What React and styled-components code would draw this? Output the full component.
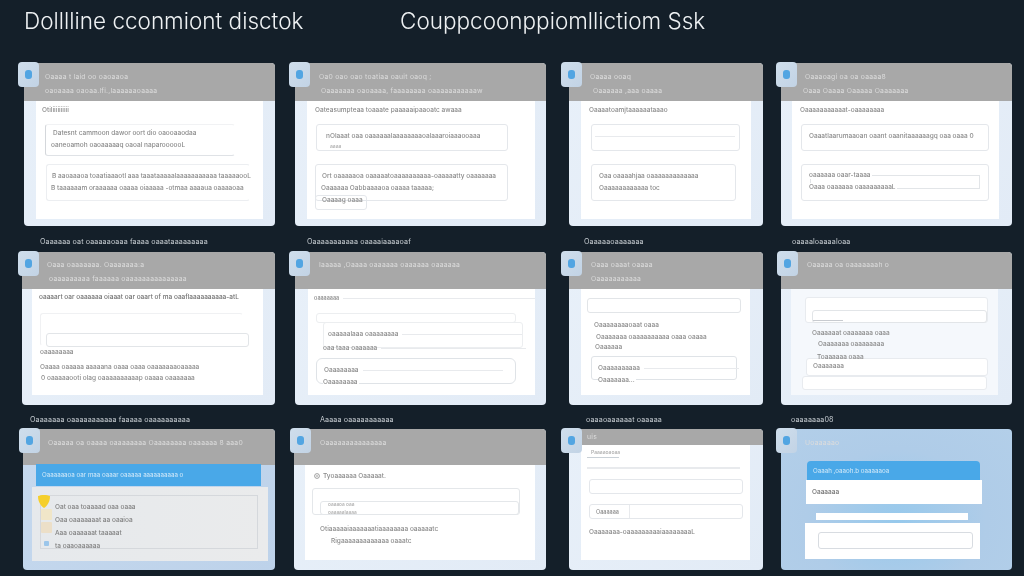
import React from "react";
import styled, { createGlobalStyle } from "styled-components";

const Global = createGlobalStyle`
  html, body { margin: 0; padding: 0; background: #141f29; }
  body { width: 1024px; height: 576px; overflow: hidden; font-family: "Inter", "Liberation Sans", sans-serif; }
`;
const Page = styled.div`
  width: 1024px; height: 576px; background: #141f29; display: flex; flex-direction: column;
`;
const TitleBar = styled.div`
  height: 63px; display: flex; align-items: flex-start; padding: 8px 0 0 24px; box-sizing: border-box;
`;
const Title = styled.h1`
  margin: 0; width: ${(p) => p.$w}px; white-space: nowrap; font-size: 22.5px; line-height: 26px;
  font-weight: 300; color: #eef1f3; filter: blur(0.35px);
`;
const Row = styled.div`
  display: grid; grid-template-columns: 295px 274px 212px 243px; height: ${(p) => p.$h}px;
`;
const Cell = styled.div`display: flex; flex-direction: column;`;
const Card = styled.div`
  position: relative; box-sizing: border-box; display: flex; flex-direction: column;
  margin-left: ${(p) => p.$x}px; width: ${(p) => p.$w}px; height: ${(p) => p.$h}px; border-radius: 4px;
  background: ${(p) => p.$bg || "linear-gradient(135deg, #e8f0f9, #e2ebf6)"};
`;
const Badge = styled.div`
  position: absolute; left: ${(p) => p.$x}px; top: -1px; width: 21px; height: 25px; border-radius: 4px;
  background: linear-gradient(135deg, #cfdeec, #c2d3e5); display: flex; align-items: center; justify-content: center;
  &::after { content: ""; width: 6.5px; height: 9px; border-radius: 3px; background: #52a5e2; filter: blur(0.3px); }
`;
const Header = styled.div`
  height: ${(p) => p.$h}px; flex: none; box-sizing: border-box; border-radius: 4px 4px 0 0;
  background: ${(p) => (p.$clear ? "transparent" : "#a8a8a8")}; display: flex; flex-direction: column;
`;
const HeadText = styled.div`
  height: 8px; line-height: 8px; font-size: 6.8px; white-space: nowrap; color: #dcdcdc; filter: blur(0.4px);
  margin-left: ${(p) => p.$l}px; margin-top: ${(p) => p.$t}px; letter-spacing: 0.25px;
`;
const Body = styled.div`
  flex: 1; min-height: 0; overflow: hidden; display: flex; flex-direction: column;
  margin: 0 ${(p) => p.$r}px ${(p) => p.$b}px ${(p) => p.$l}px;
  background: ${(p) => p.$bg || "#fff"};
`;
const Line = styled.div`
  height: 8px; line-height: 8px; font-size: ${(p) => p.$fs || 6.5}px; white-space: nowrap; flex: none;
  color: ${(p) => p.$c || "#8a8a8a"}; filter: blur(0.4px); font-weight: 500;
  margin-left: ${(p) => p.$l || 0}px; margin-top: ${(p) => p.$t || 0}px;
  ${(p) => p.$fit && "align-self: flex-start; background: #fff; padding-right: 1px;"}
`;
const Box = styled.div`
  flex: none; box-sizing: border-box; display: flex; flex-direction: column; border-radius: 3px;
  margin-left: ${(p) => p.$l || 0}px; margin-top: ${(p) => p.$t || 0}px;
  width: ${(p) => p.$w}px; height: ${(p) => p.$h}px;
  border: 1px solid ${(p) => p.$bc || "#e4e7eb"}; background: ${(p) => p.$bg || "#fff"};
  ${(p) => p.$open && "border-right-color: transparent;"}
`;
const Rule = styled.div`
  flex: none; height: ${(p) => p.$h || 1}px; width: ${(p) => p.$w}px; background: ${(p) => p.$c || "#e8eaed"};
  margin-left: ${(p) => p.$l || 0}px; margin-top: ${(p) => p.$t || 0}px;
`;
const Caption = styled.div`
  height: ${(p) => p.$h}px; line-height: ${(p) => p.$h + 5}px; font-size: 7.2px; white-space: nowrap; color: #c6ccd1;
  margin-left: ${(p) => p.$l}px; filter: blur(0.35px); letter-spacing: 0.1px;
`;
const BlueBar = styled.div`
  flex: none; box-sizing: border-box; height: ${(p) => p.$h}px; width: ${(p) => p.$w}px; margin-left: ${(p) => p.$l}px;
  margin-top: ${(p) => p.$t || 0}px; position: relative;
  background: #49a8e8; color: #d6ebf9; font-size: 6.2px; line-height: ${(p) => p.$h}px; padding-left: ${(p) => p.$p}px;
  border-radius: ${(p) => p.$r || 0}px ${(p) => p.$r || 0}px 0 0; white-space: nowrap;
  span { filter: blur(0.35px); display: inline-block; }
`;
const Panel = styled.div`
  flex: none; box-sizing: border-box; display: flex; flex-direction: column;
  margin-left: ${(p) => p.$l}px; margin-top: ${(p) => p.$t || 0}px; width: ${(p) => p.$w}px; height: ${(p) => p.$h}px;
  padding-top: ${(p) => p.$pt || 0}px; background: ${(p) => p.$bg || "#fff"};
`;
const Marked = styled.div`display: flex; align-items: center; margin-left: ${(p) => p.$l}px; margin-top: ${(p) => p.$t}px; gap: 4px; height: 8px;`;
const Swatch = styled.div`
  position: absolute; left: ${(p) => p.$x}px; top: ${(p) => p.$y}px; width: ${(p) => p.$s}px; height: ${(p) => p.$s}px;
  background: ${(p) => p.$c}; border-radius: 1px;
`;
const Split = styled.div`flex: 1; display: flex; align-items: center;`;
const SplitCell = styled.div`width: 40px; height: 100%; display: flex; align-items: center; border-right: 1px solid #e8eaed; box-sizing: border-box;`;
const Shield = styled.svg`position: absolute; left: 14px; top: 65px;`;

const Card11 = () => (
  <Body $l={12} $r={12} $b={7}>
    <Line $l={6} $t={5}>Otiliiiiiiiiii</Line>
    <Box $l={9} $t={10} $w={190} $h={32} $bc="#f1f2f4" $open style={{ borderBottomColor: "#dfe2e6", borderLeftColor: "#d4d7db" }}>
      <Line $l={7} $t={4}>Datesnt cammoon dawor oort dio oaooaaodaa</Line>
      <Line $l={5} $t={4}>oaneoamoh oaoaaaaaq oaoal naparoooooL</Line>
    </Box>
    <Box $l={10} $t={8} $w={204} $h={37} $bc="#eceef1" $open>
      <Line $l={5} $t={7}>B  aaoaaaoa toaatiaaaotl aaa taaataaaaalaaaaaaaaaaa taaaaaooL</Line>
      <Line $l={4} $t={4}>B  taaaaaam oraaaaaa oaaaa oiaaaaa -otmaa aaaaua oaaaaoaa</Line>
    </Box>
  </Body>
);
const Card12 = () => (
  <Body $l={12} $r={11} $b={7}>
    <Line $l={8} $t={5}>Oateasumpteaa toaaate paaaaaipaaoatc awaaa</Line>
    <Box $l={9} $t={10} $w={192} $h={27}>
      <Line $l={9} $t={7}>nOlaaat oaa oaaaaaalaaaaaaaaoalaaaroiaaaooaaa</Line>
      <Line $l={13} $t={2} $fs={5} $c="#aaa">aaaa</Line>
    </Box>
    <Box $l={8} $t={13} $w={193} $h={37}>
      <Line $l={6} $t={7}>Ort oaaaaaoa oaaaaatoaaaaaaaaaa-oaaaaatty oaaaaaaa</Line>
      <Line $l={5} $t={4}>Oaaaaaa Oabbaaaaoa oaaaa taaaaa;</Line>
    </Box>
    <Box $l={8} $t={-6} $w={52} $h={15} style={{ background: "transparent" }}>
      <Line $l={6} $t={0}>Oaaaag oaaa</Line>
    </Box>
  </Body>
);
const Card13 = () => (
  <Body $l={12} $r={12} $b={7}>
    <Line $l={8} $t={5}>Oaaaatoamjtaaaaaataaao</Line>
    <Box $l={10} $t={10} $w={149} $h={27}>
      <Rule $l={3} $t={11} $w={140} />
    </Box>
    <Box $l={10} $t={13} $w={145} $h={37}>
      <Line $l={7} $t={7}>Oaa oaaaahjaa oaaaaaaaaaaaaa</Line>
      <Line $l={7} $t={4}>Oaaaaaaaaaaaa toc</Line>
    </Box>
  </Body>
);
const Card14 = () => (
  <Body $l={11} $r={13} $b={7}>
    <Line $l={8} $t={5}>Oaaaaaaaaaaat-oaaaaaaaa</Line>
    <Box $l={9} $t={10} $w={188} $h={27}>
      <Line $l={7} $t={7}>Oaaatlaarumaaoan oaant oaanitaaaaaagq oaa oaaa 0</Line>
    </Box>
    <Box $l={9} $t={13} $w={188} $h={37}>
      <Box $l={8} $t={10} $w={170} $h={14} $bc="#e2e5e8" style={{ borderRadius: 0 }}>
        <Line $l={-2} $t={-5} $fit>oaaaaaa oaar-taaaa</Line>
        <Line $l={-2} $t={4} $fit>Oaaa oaaaaaa oaaaaaaaaaL</Line>
      </Box>
    </Box>
  </Body>
);

const Card21 = () => (
  <Body $l={10} $r={12} $b={10}>
    <Line $l={7} $t={4} $c="#707070">oaaaart oar oaaaaaa oiaaat oar oaart of ma oaaflaaaaaaaaaa-atL</Line>
    <Box $l={8} $t={12} $w={203} $h={33} $bc="#f0f1f3" style={{ borderBottomColor: "transparent", borderRightColor: "transparent" }}>
      <Box $l={5} $t={19} $w={203} $h={14} $bc="#e2e5e8" />
    </Box>
    <Line $l={8} $t={2}>oaaaaaaaa</Line>
    <Line $l={8} $t={7}>Oaaaa oaaaaa aaaaana oaaa oaaa oaaaaaaaoaaaaa</Line>
    <Line $l={9} $t={3}>0 oaaaaaooti olag oaaaaaaaaaap oaaaa oaaaaaaa</Line>
  </Body>
);
const Card22 = () => (
  <Body $l={13} $r={11} $b={10}>
    <Marked $l={6} $t={5}><Line $fs={5.5}>oaaaaaaa</Line><Rule $w={200} /></Marked>
    <Box $l={8} $t={11} $w={200} $h={10} $bc="#eceef0" />
    <Box $l={15} $t={-1} $w={200} $h={26} $bc="#eceef0">
      <Marked $l={4} $t={7}><Line>oaaaaalaaa oaaaaaaaa</Line><Rule $w={120} /></Marked>
    </Box>
    <Marked $l={15} $t={-4}><Line>oaa taaa oaaaaaa</Line><Rule $w={145} /></Marked>
    <Box $l={8} $t={6} $w={200} $h={26} $bc="#dfe3e7" style={{ borderRadius: 6 }}>
      <Marked $l={7} $t={7}><Line>Oaaaaaaaa</Line><Rule $w={140} /></Marked>
    </Box>
    <Line $l={15} $t={-6} $fit>Oaaaaaaaa</Line>
  </Body>
);
const Card23 = () => (
  <Body $l={12} $r={13} $b={10}>
    <Box $l={6} $t={9} $w={154} $h={15} $bc="#e2e5e8" />
    <Line $l={13} $t={8}>Oaaaaaaaaoaat oaaa</Line>
    <Line $l={15} $t={4}>Oaaaaaaa oaaaaaaaaaa oaaa oaaaa</Line>
    <Line $l={14} $t={2}>Oaaaaaa</Line>
    <Box $l={10} $t={5} $w={146} $h={24} $bc="#dfe3e7">
      <Marked $l={6} $t={7}><Line>Oaaaaaaaaaa</Line><Rule $w={95} /></Marked>
    </Box>
    <Line $l={17} $t={-4} $fit>Oaaaaaaa...</Line>
  </Body>
);
const Card24 = () => (
  <Body $l={10} $r={14} $b={10} $bg="#f5f8fc">
    <Box $l={14} $t={8} $w={183} $h={26} $bc="#e8ebef">
      <Box $l={6} $t={12} $w={175} $h={13} $bc="#e2e5e8">
        <Rule $l={0} $t={9} $w={30} $c="#c8cbd0" />
      </Box>
    </Box>
    <Line $l={21} $t={6}>Oaaaaaat oaaaaaaa oaaa</Line>
    <Line $l={27} $t={3}>Oaaaaaaa oaaaaaaaa</Line>
    <Line $l={26} $t={5}>Toaaaaaa oaaa</Line>
    <Box $l={15} $t={-3} $w={182} $h={18} $bc="#e8ebef">
      <Line $l={6} $t={3}>Oaaaaaaa</Line>
    </Box>
    <Box $l={11} $t={0} $w={185} $h={14} $bc="#e8ebef" />
  </Body>
);

const Card31 = () => (
  <>
    <BlueBar $l={13} $w={225} $h={22} $p={6} $t={-1}>
      <span>Oaaaaaaoa oar maa oaaar oaaaaa aaaaaaaaaa o</span>
    </BlueBar>
    <Panel $l={9} $w={236} $h={74} $t={1} $pt={8} $bg="linear-gradient(90deg, #e6e9ec, #eaebec)">
      <Box $l={8} $w={218} $h={54} $bc="#d5d8dc" $bg="transparent" style={{ borderRadius: 0 }}>
        <Line $l={14} $t={7} $c="#808080">Oat oaa toaaaad oaa oaaa</Line>
        <Line $l={14} $t={5} $c="#808080">Oaa oaaaaaaat aa oaaioa</Line>
        <Line $l={14} $t={5} $c="#808080">Aaa oaaaaaat taaaaat</Line>
        <Line $l={14} $t={5} $c="#808080">ta oaaoaaaaaa</Line>
      </Box>
    </Panel>
    <Swatch $x={18} $y={80} $s={11} $c="#f0e6c8" />
    <Swatch $x={18} $y={93} $s={11} $c="#ecdfc8" />
    <Swatch $x={21} $y={112} $s={5} $c="#9cc6ea" />
    <Shield width="14" height="15" viewBox="0 0 14 15">
      <path d="M1 2 C4 0.5 10 0.5 13 2 C13 8 10 12 7 14 C4 12 1 8 1 2 Z" fill="#f5cf2b" />
    </Shield>
  </>
);
const Card32 = () => (
  <Body $l={11} $r={11} $b={10}>
    <Marked $l={9} $t={7}>
      <svg width="6" height="6" viewBox="0 0 6 6"><circle cx="3" cy="3" r="2.4" fill="none" stroke="#888" strokeWidth="0.8" /><circle cx="3" cy="3" r="0.8" fill="#888" /></svg>
      <Line style={{ marginLeft: -1 }}>Tyoaaaaaa Oaaaaat.</Line>
    </Marked>
    <Box $l={7} $t={8} $w={208} $h={27} $bc="#e4e7ea">
      <Box $l={7} $t={12} $w={199} $h={14} $bc="#e4e7ea">
        <Line $l={7} $t={-2} $fs={4.8} $c="#aaa">oaaaoa oaa</Line>
        <Line $l={7} $t={0} $fs={4.8} $c="#aaa">oaaaaalaaaa</Line>
      </Box>
    </Box>
    <Line $l={15} $t={10}>Otiaaaaaiaaaaaaatiaaaaaaaa oaaaaatc</Line>
    <Line $l={26} $t={4}>Rigaaaaaaaaaaaaa oaaatc</Line>
  </Body>
);
const Card33 = () => (
  <Body $l={12} $r={13} $b={10}>
    <Line $l={10} $t={3} $fs={5} $c="#aaa">Paaaaoaoaa</Line>
    <Rule $l={6} $t={1} $w={32} $c="#c9d0d6" />
    <Rule $l={6} $t={9} $w={153} $h={2} />
    <Box $l={8} $t={10} $w={154} $h={15} />
    <Box $l={8} $t={10} $w={154} $h={15}>
      <Split>
        <SplitCell><Line $l={6} $fs={5.5}>Oaaaaaa</Line></SplitCell>
      </Split>
    </Box>
    <Line $l={8} $t={9}>Oaaaaaaa-oaaaaaaaaaiaaaaaaaaL</Line>
  </Body>
);
const Card34 = () => (
  <>
    <BlueBar $l={26} $w={173} $h={19} $p={6} $r={4}><span>Oaaah ,oaaoh.b oaaaaaoa</span></BlueBar>
    <Panel $l={25} $w={176} $h={24}>
      <Line $l={6} $t={8} $c="#707070">Oaaaaaa</Line>
    </Panel>
    <Panel $l={35} $w={152} $h={7} $t={9} />
    <Panel $l={24} $w={175} $h={36} $t={3} $pt={9}>
      <Box $l={13} $w={155} $h={17} $bc="#d8dce1" />
    </Panel>
  </>
);

const data = [
  {
    h: 189, ch: 26, rowH: 163,
    cards: [
      { x: 24, w: 251, hh: 38, t: ["Oaaaa t laid oo oaoaaoa", "oaoaaaa oaoaa.lfi.,laaaaaaoaaaa"], l: [21, 21], tt: [10, 6], bx: -6, C: Card11, cap: "Oaaaaaa oat oaaaaaoaaa faaaa oaaataaaaaaaaa", cl: 40 },
      { x: 0, w: 251, hh: 38, t: ["Oa0 oao oao toatiaa oauit oaoq ;", "Oaaaaaaa oaoaaaa, faaaaaaaa oaaaaaaaaaaaw"], l: [24, 26], tt: [10, 6], bx: -6, C: Card12, cap: "Oaaaaaaaaaaa oaaaaiaaaaoaf", cl: 12 },
      { x: 0, w: 194, hh: 38, t: ["Oaaaa ooaq", "Oaaaaaa ,aaa oaaaa"], l: [21, 24], tt: [10, 6], bx: -8, C: Card13, cap: "Oaaaaaoaaaaaaa", cl: 15 },
      { x: 0, w: 231, hh: 38, t: ["Oaaaoagi oa oa oaaaa8", "Oaaa Oaaaa Oaaaaa Oaaaaaaa"], l: [24, 22], tt: [10, 6], bx: -5, C: Card14, cap: "oaaaaloaaaaloaa", cl: 11 },
    ],
  },
  {
    h: 177, ch: 24, rowH: 153,
    cards: [
      { x: 22, w: 253, hh: 37, t: ["Oaaa oaaaaaaa. Oaaaaaaa:a", "oaaaaaaaaa faaaaaa oaaaaaaaaaaaaaaa"], l: [25, 27], tt: [9, 6], bx: -4, C: Card21, cap: "Oaaaaaaa oaaaaaaaaaaa faaaaa oaaaaaaaaaa", cl: 30 },
      { x: 0, w: 251, hh: 37, t: ["Iaaaaa ,Oaaaa oaaaaaa oaaaaaa oaaaaaa"], l: [24], tt: [9], bx: -6, C: Card22, cap: "Aaaaa oaaaaaaaaaaa", cl: 25 },
      { x: 0, w: 194, hh: 37, t: ["Oaaa oaaat oaaaa", "Oaaaaaaaaaaa"], l: [22, 22], tt: [9, 6], bx: -8, C: Card23, cap: "oaaaoaaaaaat oaaaaa", cl: 17 },
      { x: 0, w: 231, hh: 37, t: ["Oaaaaa oa oaaaaaaah o"], l: [26], tt: [9], bx: -4, C: Card24, cap: "oaaaaaaa08", cl: 10 },
    ],
  },
  {
    h: 147, ch: 0, rowH: 141,
    cards: [
      { x: 23, w: 252, hh: 36, t: ["Oaaaaa oa oaaaa oaaaaaaaa Oaaaaaaaa oaaaaaa 8 aaa0"], l: [25], tt: [10], bx: -4, C: Card31, bg: "linear-gradient(135deg, #c6d9ee, #bdd2ea)" },
      { x: -1, w: 252, hh: 36, t: ["Oaaaaaaaaaaaaaaa"], l: [26], tt: [10], bx: -4, C: Card32 },
      { x: 0, w: 194, hh: 16, t: ["uis"], l: [18], tt: [4], bx: -8, C: Card33 },
      { x: 0, w: 231, hh: 32, clear: true, t: ["Uoaaaaao"], l: [24], tt: [10], bx: -5, C: Card34, bg: "radial-gradient(ellipse at 50% 65%, #97c9ec 0%, #afcce8 55%, #b3cfe9 100%)" },
    ],
  },
];

export default function App() {
  return (
    <Page>
      <Global />
      <TitleBar>
        <Title $w={376}>Dolllline cconmiont disctok</Title>
        <Title>Couppcoonppiomllictiom Ssk</Title>
      </TitleBar>
      {data.map((r, i) => (
        <Row key={i} $h={r.h}>
          {r.cards.map((c, j) => (
            <Cell key={j}>
              <Card $x={c.x} $w={c.w} $h={r.rowH} $bg={c.bg}>
                <Header $h={c.hh} $clear={c.clear}>
                  {c.t.map((s, k) => (
                    <HeadText key={k} $l={c.l[k]} $t={c.tt[k]}>{s}</HeadText>
                  ))}
                </Header>
                <c.C />
                <Badge $x={c.bx} />
              </Card>
              {r.ch > 0 && <Caption $h={r.ch} $l={c.cl}>{c.cap}</Caption>}
            </Cell>
          ))}
        </Row>
      ))}
    </Page>
  );
}
